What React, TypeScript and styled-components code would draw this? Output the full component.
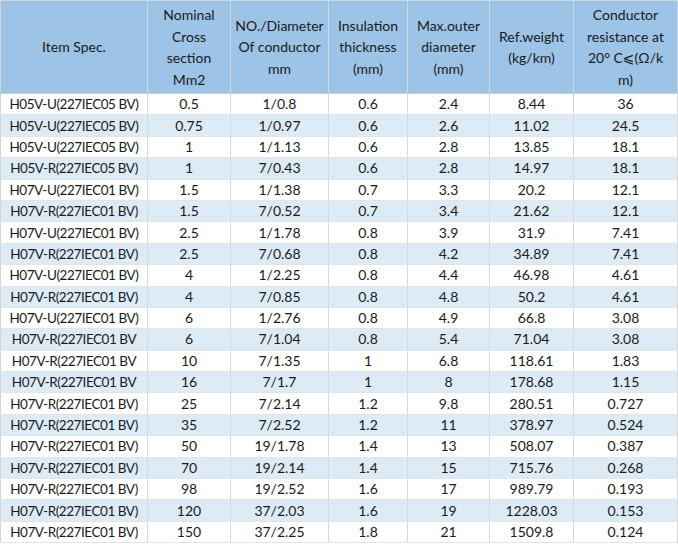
import React from "react";
import styled, { createGlobalStyle } from "styled-components";

const Global = createGlobalStyle`
  html, body { margin: 0; padding: 0; background: #ffffff; }
  body { font-family: Lato, "Noto Sans", "DejaVu Sans", sans-serif; }
`;

const Table = styled.table`
  border-collapse: collapse;
  table-layout: fixed;
  width: 678px;
  font-family: Lato, "Noto Sans", "DejaVu Sans", sans-serif;
  font-size: 14px;
  color: #1a1a1a;
  border: 1px solid #d4d4d4;
`;

const HeadCell = styled.th`
  background: #9dc3e6;
  font-weight: 400;
  text-align: center;
  vertical-align: middle;
  height: 92px;
  padding: 0 2px;
  line-height: 21.5px;
  border-right: 1px solid #c6dbef;
  border-bottom: 1px solid #b9d1ea;
  &:last-child { border-right: 1px solid #d4d4d4; }
`;

const Row = styled.tr<{ $alt: boolean }>`
  background: ${(p) => (p.$alt ? "#ddebf7" : "#ffffff")};
`;

const Cell = styled.td<{ $spec?: boolean }>`
  height: 20.4px;
  padding: 0;
  text-align: center;
  vertical-align: middle;
  line-height: 20px;
  white-space: nowrap;
  font-size: ${(p) => (p.$spec ? "13.5px" : "14px")};
  letter-spacing: ${(p) => (p.$spec ? "-0.45px" : "0")};
  border-right: 1px solid #d9d9d9;
  border-bottom: 1px solid #e4e4e4;
`;

const widths = [147, 83, 98, 79, 82, 84, 104];

const headers: React.ReactNode[] = [
  "Item Spec.",
  <>Nominal<br />Cross<br />section<br />Mm2</>,
  <>NO./Diameter<br />Of conductor<br />mm</>,
  <>Insulation<br />thickness<br />(mm)</>,
  <>Max.outer<br />diameter<br />(mm)</>,
  <>Ref.weight<br />(kg/km)</>,
  <>Conductor<br />resistance at<br />20° C⩽(Ω/k<br />m)</>,
];

const rows: string[][] = [
  ["H05V-U(227IEC05 BV)", "0.5", "1/0.8", "0.6", "2.4", "8.44", "36"],
  ["H05V-U(227IEC05 BV)", "0.75", "1/0.97", "0.6", "2.6", "11.02", "24.5"],
  ["H05V-U(227IEC05 BV)", "1", "1/1.13", "0.6", "2.8", "13.85", "18.1"],
  ["H05V-R(227IEC05 BV)", "1", "7/0.43", "0.6", "2.8", "14.97", "18.1"],
  ["H07V-U(227IEC01 BV)", "1.5", "1/1.38", "0.7", "3.3", "20.2", "12.1"],
  ["H07V-R(227IEC01 BV)", "1.5", "7/0.52", "0.7", "3.4", "21.62", "12.1"],
  ["H07V-U(227IEC01 BV)", "2.5", "1/1.78", "0.8", "3.9", "31.9", "7.41"],
  ["H07V-R(227IEC01 BV)", "2.5", "7/0.68", "0.8", "4.2", "34.89", "7.41"],
  ["H07V-U(227IEC01 BV)", "4", "1/2.25", "0.8", "4.4", "46.98", "4.61"],
  ["H07V-R(227IEC01 BV)", "4", "7/0.85", "0.8", "4.8", "50.2", "4.61"],
  ["H07V-U(227IEC01 BV)", "6", "1/2.76", "0.8", "4.9", "66.8", "3.08"],
  ["H07V-R(227IEC01 BV", "6", "7/1.04", "0.8", "5.4", "71.04", "3.08"],
  ["H07V-R(227IEC01 BV", "10", "7/1.35", "1", "6.8", "118.61", "1.83"],
  ["H07V-R(227IEC01 BV", "16", "7/1.7", "1", "8", "178.68", "1.15"],
  ["H07V-R(227IEC01 BV)", "25", "7/2.14", "1.2", "9.8", "280.51", "0.727"],
  ["H07V-R(227IEC01 BV)", "35", "7/2.52", "1.2", "11", "378.97", "0.524"],
  ["H07V-R(227IEC01 BV)", "50", "19/1.78", "1.4", "13", "508.07", "0.387"],
  ["H07V-R(227IEC01 BV)", "70", "19/2.14", "1.4", "15", "715.76", "0.268"],
  ["H07V-R(227IEC01 BV)", "98", "19/2.52", "1.6", "17", "989.79", "0.193"],
  ["H07V-R(227IEC01 BV)", "120", "37/2.03", "1.6", "19", "1228.03", "0.153"],
  ["H07V-R(227IEC01 BV)", "150", "37/2.25", "1.8", "21", "1509.8", "0.124"],
];

export default function App() {
  return (
    <>
      <Global />
      <Table>
        <colgroup>
          {widths.map((w, i) => (
            <col key={i} style={{ width: w }} />
          ))}
        </colgroup>
        <thead>
          <tr>
            {headers.map((h, i) => (
              <HeadCell key={i}>{h}</HeadCell>
            ))}
          </tr>
        </thead>
        <tbody>
          {rows.map((r, i) => (
            <Row key={i} $alt={i % 2 === 1}>
              {r.map((c, j) => (
                <Cell key={j} $spec={j === 0}>
                  {c}
                </Cell>
              ))}
            </Row>
          ))}
        </tbody>
      </Table>
    </>
  );
}
